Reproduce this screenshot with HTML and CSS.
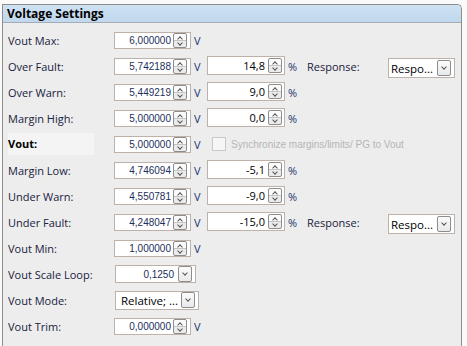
FILE: index.html
```html
<!DOCTYPE html>
<html lang="en">
<head>
    <meta charset="UTF-8">
    <title>Voltage Settings</title>
    <link rel="stylesheet" href="styles.css">
</head>
<body>
    <div class="panel">
        <div class="panel-head">Voltage Settings</div>
        <div class="rows">
            <div class="row">
                <span class="lbl">Vout Max:</span>
                <div class="field"><span class="num">6,000000</span><span class="spin-btn"></span></div>
                <span class="unit">V</span>
            </div>
            <div class="row">
                <span class="lbl">Over Fault:</span>
                <div class="field"><span class="num">5,742188</span><span class="spin-btn"></span></div>
                <span class="unit">V</span>
                <div class="field pct"><span class="num">14,8</span><span class="spin-btn"></span></div>
                <span class="unit">%</span>
                <span class="lbl">Response:</span>
                <div class="combo"><span class="combo-text">Respo...</span><span class="drop-btn"></span></div>
            </div>
            <div class="row">
                <span class="lbl">Over Warn:</span>
                <div class="field"><span class="num">5,449219</span><span class="spin-btn"></span></div>
                <span class="unit">V</span>
                <div class="field pct"><span class="num">9,0</span><span class="spin-btn"></span></div>
                <span class="unit">%</span>
            </div>
            <div class="row">
                <span class="lbl">Margin High:</span>
                <div class="field"><span class="num">5,000000</span><span class="spin-btn"></span></div>
                <span class="unit">V</span>
                <div class="field pct"><span class="num">0,0</span><span class="spin-btn"></span></div>
                <span class="unit">%</span>
            </div>
            <div class="row">
                <span class="lbl lbl-main">Vout:</span>
                <div class="field"><span class="num">5,000000</span><span class="spin-btn"></span></div>
                <span class="unit">V</span>
                <label class="sync"><span class="check"></span>Synchronize margins/limits/ PG to Vout</label>
            </div>
            <div class="row">
                <span class="lbl">Margin Low:</span>
                <div class="field"><span class="num">4,746094</span><span class="spin-btn"></span></div>
                <span class="unit">V</span>
                <div class="field pct"><span class="num">-5,1</span><span class="spin-btn"></span></div>
                <span class="unit">%</span>
            </div>
            <div class="row">
                <span class="lbl">Under Warn:</span>
                <div class="field"><span class="num">4,550781</span><span class="spin-btn"></span></div>
                <span class="unit">V</span>
                <div class="field pct"><span class="num">-9,0</span><span class="spin-btn"></span></div>
                <span class="unit">%</span>
            </div>
            <div class="row">
                <span class="lbl">Under Fault:</span>
                <div class="field"><span class="num">4,248047</span><span class="spin-btn"></span></div>
                <span class="unit">V</span>
                <div class="field pct"><span class="num">-15,0</span><span class="spin-btn"></span></div>
                <span class="unit">%</span>
                <span class="lbl">Response:</span>
                <div class="combo"><span class="combo-text">Respo...</span><span class="drop-btn"></span></div>
            </div>
            <div class="row">
                <span class="lbl">Vout Min:</span>
                <div class="field"><span class="num">1,000000</span><span class="spin-btn"></span></div>
                <span class="unit">V</span>
            </div>
            <div class="row">
                <span class="lbl">Vout Scale Loop:</span>
                <div class="combo combo-scale"><span class="num">0,1250</span><span class="drop-btn"></span></div>
            </div>
            <div class="row">
                <span class="lbl">Vout Mode:</span>
                <div class="combo combo-mode"><span class="combo-text">Relative; ...</span><span class="drop-btn"></span></div>
            </div>
            <div class="row">
                <span class="lbl">Vout Trim:</span>
                <div class="field"><span class="num">0,000000</span><span class="spin-btn"></span></div>
                <span class="unit">V</span>
            </div>
        </div>
    </div>
</body>
</html>
```

FILE: styles.css
```css
/* General */
body {
    margin: 0;
    height: 100vh;
    background: #fafafa;
    font-family: "Open Sans", "Liberation Sans", sans-serif;
    font-size: 11px;
    color: #18223c;
    overflow: hidden;
}

/* Group box */
.panel {
    box-sizing: border-box;
    height: calc(100vh - 4px);
    margin: 4px 5px 0 2px;
    border: 1px solid #8e8e8e;
    border-bottom: none;
    border-radius: 0 5px 0 0;
    background: #ededed;
    overflow: hidden;
}

.panel-head {
    height: 17px;
    line-height: 17px;
    padding-left: 4px;
    background: linear-gradient(#cde1f2, #c0d8ed);
    border-bottom: 1px solid #a5acb3;
    border-radius: 0 4px 0 0;
    font-size: 12px;
    font-weight: bold;
    color: #000;
}

/* Rows */
.rows {
    padding: 4px 0 0 5px;
}

.row {
    display: grid;
    grid-template-columns: 106px 77px 16px 78px 22px 81px 67px;
    align-items: center;
    height: 26px;
}

.lbl {
    white-space: nowrap;
}

.lbl-main {
    font-weight: bold;
    color: #000;
    background: #f4f4f4;
    width: 86px;
    height: 22px;
    line-height: 22px;
}

.unit {
    padding-left: 3px;
    color: #1b3470;
}

/* Spin fields */
.field {
    display: flex;
    align-items: center;
    justify-content: flex-end;
    box-sizing: border-box;
    height: 17px;
    padding-right: 3px;
    background: #fff;
    border: 1px solid #bcb2aa;
}

.field.pct {
    height: 19px;
    margin-top: -2px;
    padding-right: 2px;
}

.num {
    margin-right: 2px;
    font-family: "Liberation Sans", sans-serif;
    font-size: 10px;
    color: #1d2f5c;
}

.pct .num {
    font-family: "Open Sans", sans-serif;
    font-size: 11px;
    color: #000;
    margin-right: 3px;
}

.spin-btn, .drop-btn {
    position: relative;
    box-sizing: border-box;
    width: 14px;
    height: 15px;
    border: 1px solid #8d8d8d;
    border-radius: 2px;
    background: linear-gradient(#fbfbfb 0 6px, #c4c4c4 6px 7px, #ebebeb 7px);
}

.spin-btn::before, .spin-btn::after, .drop-btn::after {
    content: "";
    position: absolute;
    left: 4px;
    width: 3px;
    height: 3px;
    border-left: 1px solid #555;
    border-top: 1px solid #555;
}

.spin-btn::before {
    top: 3px;
    transform: rotate(45deg);
}

.spin-btn::after {
    top: 7px;
    transform: rotate(225deg);
}

/* Combo boxes */
.combo {
    display: flex;
    align-items: center;
    justify-content: space-between;
    box-sizing: border-box;
    height: 20px;
    margin-top: 4px;
    padding: 0 3px 0 2px;
    background: #fff;
    border: 1px solid #bcb2aa;
}

.combo-text {
    color: #000;
    white-space: nowrap;
    font-size: 11.5px;
}

.drop-btn {
    height: 16px;
    background: linear-gradient(#fbfbfb, #e9e9e9);
}

.drop-btn::after {
    top: 4px;
    transform: rotate(225deg);
}

.combo-scale, .combo-mode {
    grid-column: 2 / span 3;
    margin-left: 1px;
}

.combo-scale {
    width: 81px;
    height: 18px;
    margin-top: 0;
    justify-content: flex-end;
}

.combo-scale .num {
    margin-right: 4px;
}

.combo-mode {
    width: 84px;
    height: 19px;
    margin-top: 0;
    padding-left: 5px;
}

/* Disabled sync checkbox */
.sync {
    grid-column: 4 / span 4;
    display: flex;
    align-items: center;
    padding-left: 5px;
    color: #b5b5b5;
    font-family: "Liberation Sans", sans-serif;
    font-size: 10px;
    white-space: nowrap;
}

.check {
    box-sizing: border-box;
    width: 14px;
    height: 14px;
    margin-right: 5px;
    border: 1px solid #c9c9c9;
    background: #f6f6f6;
}
```
